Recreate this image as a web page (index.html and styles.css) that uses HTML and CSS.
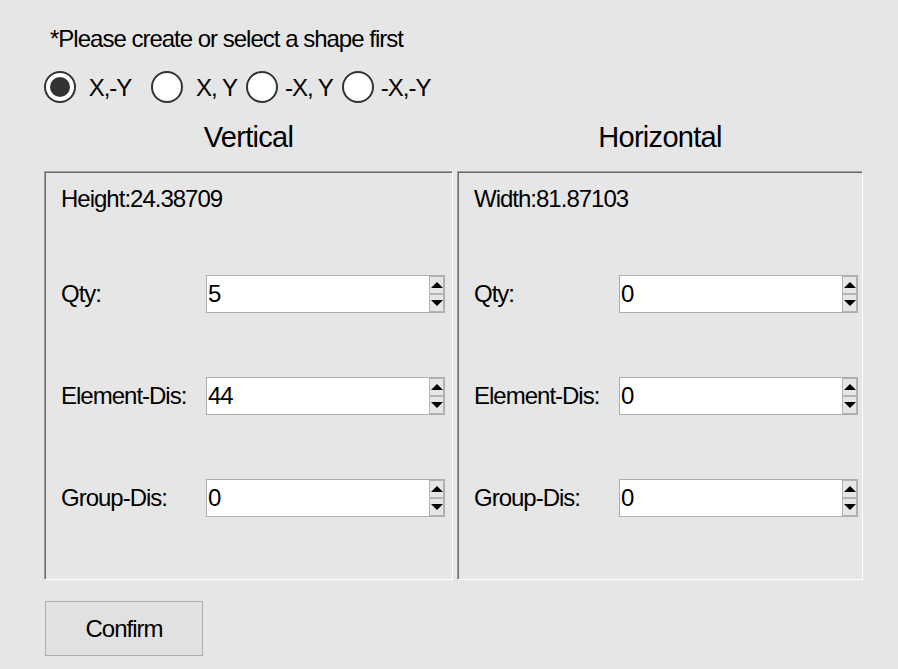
FILE: index.html
```
<!DOCTYPE html>
<html>
<head>
<meta charset="utf-8">
<link rel="stylesheet" href="styles.css">
</head>
<body>
<div class="app">
  <div class="note">*Please create or select a shape first</div>
  <div class="radios">
    <div class="radio first"><span class="circle checked"></span><span class="rlabel">&nbsp;X,-Y</span></div>
    <div class="radio"><span class="circle"></span><span class="rlabel">&nbsp;X, Y</span></div>
    <div class="radio tight"><span class="circle"></span><span class="rlabel">-X, Y</span></div>
    <div class="radio tight"><span class="circle"></span><span class="rlabel">-X,-Y</span></div>
  </div>
  <div class="titles">
    <div class="title">Vertical</div>
    <div class="title">Horizontal</div>
  </div>
  <div class="panels">
    <div class="panel">
      <div class="dim">Height:24.38709</div>
      <div class="rows">
        <div class="row"><span class="lbl">Qty:</span><div class="spinbox"><span class="val">5</span><div class="spin"><div class="sbtn"><span class="up"></span></div><div class="sbtn"><span class="down"></span></div></div></div></div>
        <div class="row"><span class="lbl">Element-Dis:</span><div class="spinbox"><span class="val">44</span><div class="spin"><div class="sbtn"><span class="up"></span></div><div class="sbtn"><span class="down"></span></div></div></div></div>
        <div class="row"><span class="lbl">Group-Dis:</span><div class="spinbox"><span class="val">0</span><div class="spin"><div class="sbtn"><span class="up"></span></div><div class="sbtn"><span class="down"></span></div></div></div></div>
      </div>
    </div>
    <div class="panel">
      <div class="dim">Width:81.87103</div>
      <div class="rows">
        <div class="row"><span class="lbl">Qty:</span><div class="spinbox"><span class="val">0</span><div class="spin"><div class="sbtn"><span class="up"></span></div><div class="sbtn"><span class="down"></span></div></div></div></div>
        <div class="row"><span class="lbl">Element-Dis:</span><div class="spinbox"><span class="val">0</span><div class="spin"><div class="sbtn"><span class="up"></span></div><div class="sbtn"><span class="down"></span></div></div></div></div>
        <div class="row"><span class="lbl">Group-Dis:</span><div class="spinbox"><span class="val">0</span><div class="spin"><div class="sbtn"><span class="up"></span></div><div class="sbtn"><span class="down"></span></div></div></div></div>
      </div>
    </div>
  </div>
  <button class="confirm">Confirm</button>
</div>
</body>
</html>
```
FILE: styles.css
```
html, body {
  margin: 0;
  padding: 0;
  background: #e6e6e6;
}
body {
  font-family: "Liberation Sans", Arial, sans-serif;
  font-size: 24px;
  letter-spacing: -1px;
  color: #000;
  width: 898px;
  height: 669px;
  overflow: hidden;
}
.app {
  padding: 25px 0 0 44px;
}
.note {
  margin-left: 6px;
  line-height: 27px;
}
.radios {
  margin-top: 19px;
  height: 32px;
  display: flex;
  align-items: center;
}
.radio {
  display: flex;
  align-items: center;
  gap: 7px;
  margin-right: 9px;
}
.radio.first {
  margin-right: 20px;
}
.radio.tight {
  gap: 7px;
  margin-right: 9px;
}
.circle {
  width: 32px;
  height: 32px;
  box-sizing: border-box;
  border: 2px solid #333;
  border-radius: 50%;
  background: #fff;
  display: flex;
  align-items: center;
  justify-content: center;
}
.circle.checked::after {
  content: "";
  width: 20px;
  height: 20px;
  border-radius: 50%;
  background: #333;
}
.rlabel {
  line-height: 27px;
}
.titles {
  margin-top: 18px;
  display: grid;
  grid-template-columns: 409px 406px;
  column-gap: 4px;
}
.title {
  font-size: 29px;
  letter-spacing: -0.7px;
  line-height: 33px;
  text-align: center;
}
.panels {
  margin-top: 17px;
  display: grid;
  grid-template-columns: 409px 406px;
  column-gap: 4px;
}
.panel {
  box-sizing: border-box;
  height: 409px;
  border-top: 1px solid #a0a0a0;
  border-left: 1px solid #a0a0a0;
  border-right: 1px solid #fff;
  border-bottom: 1px solid #fff;
  box-shadow: inset 1px 1px 0 #696969;
  padding: 13px 0 0 16px;
}
.dim {
  line-height: 27px;
}
.rows {
  margin-top: 63px;
  display: flex;
  flex-direction: column;
  gap: 64px;
}
.row {
  display: flex;
  align-items: center;
  height: 38px;
}
.lbl {
  width: 145px;
  line-height: 26px;
}
.spinbox {
  box-sizing: border-box;
  width: 239px;
  height: 38px;
  border: 1px solid #adadad;
  background: #fff;
  display: flex;
  align-items: stretch;
}
.val {
  flex: 1;
  padding-left: 1px;
  line-height: 36px;
}
.spin {
  width: 15px;
  display: flex;
  flex-direction: column;
}
.sbtn {
  flex: 1;
  box-sizing: border-box;
  border: 1px solid #b4b4b4;
  background: #e6e6e6;
  display: flex;
  align-items: center;
  justify-content: center;
}
.up {
  width: 0;
  height: 0;
  border-left: 6px solid transparent;
  border-right: 6px solid transparent;
  border-bottom: 6px solid #000;
}
.down {
  width: 0;
  height: 0;
  border-left: 6px solid transparent;
  border-right: 6px solid transparent;
  border-top: 6px solid #000;
}
.confirm {
  display: block;
  margin: 21px 0 0 1px;
  width: 158px;
  height: 55px;
  box-sizing: border-box;
  border: 1px solid #adadad;
  background: #e1e1e1;
  font-family: "Liberation Sans", Arial, sans-serif;
  font-size: 24px;
  letter-spacing: -1px;
  color: #000;
  padding: 0;
  border-radius: 0;
}
```
